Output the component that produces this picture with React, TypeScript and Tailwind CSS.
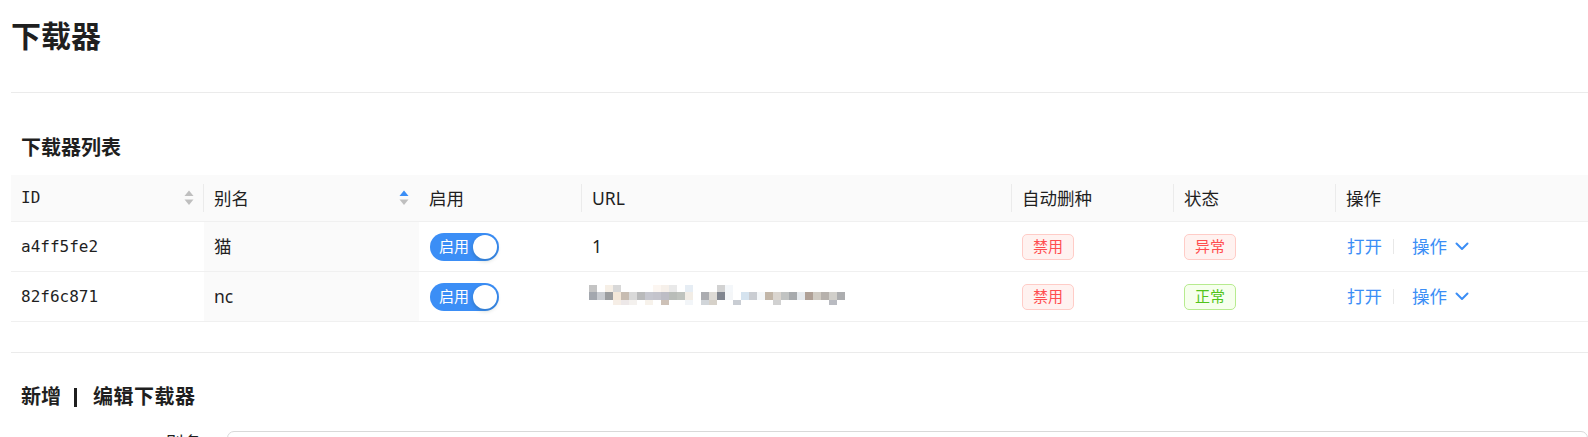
import { ReactNode } from "react";

type Downloader = {
  id: string;
  alias: string;
  enabled: boolean;
  url: string | null;
  autoDelete: boolean;
  healthy: boolean;
};

const downloaders: Downloader[] = [
  { id: "a4ff5fe2", alias: "猫", enabled: true, url: "1", autoDelete: false, healthy: false },
  { id: "82f6c871", alias: "nc", enabled: true, url: null, autoDelete: false, healthy: true },
];

// 打码后的 URL（马赛克色块）
const mosaicTop: (string | null)[] = [
  "#c4c4c4", null, "#f6efe6", "#d8d8d8", null, null, null, null,
  "#fcf6f1", "#f6f0ea", "#e9e9e9", null, "#e6edf4", null, null, null,
  "#d2d2d2", "#f4f7fa", null, null, null, null, null, null,
  null, null, null, null, null, null, null, null,
];
const mosaicMid: (string | null)[] = [
  "#a3a7ae", "#c9ccd1", "#9b9d9f", "#f3e7d8", "#c7bcb1", "#d9d9d9", "#b9babb", "#c6c7cf",
  "#c4c4cc", "#bdbdc5", "#b9bdb9", "#bfc3be", "#f2ede6", null, "#abacb0", "#dddad5",
  "#80858f", "#f4f6f8", null, "#d5e3ef", "#cacdd2", "#f4f7f9", "#c2b6a8", "#dad5cf",
  "#c1c3c2", "#a7aaad", "#e6eaee", "#afa096", "#d0cbc3", "#b6b1ac", "#d1cfca", "#acadaf",
];
const mosaicBottom: (string | null)[] = [
  null, null, null, "#f6eee6", "#ede8e8", "#f4f1ee", null, "#f7f2eb",
  null, "#cdc1b7", null, null, "#f2f5f8", null, "#d1d5d9", "#d6d1c9",
  null, null, "#c9cdd3", null, null, null, null, "#d1d1d1",
  null, null, null, null, null, null, "#b9bbc1", null,
];

function MosaicRow({ colors, h }: { colors: (string | null)[]; h: string }) {
  return (
    <div className={`flex ${h}`}>
      {colors.map((c, i) => (
        <span key={i} className="block w-2 h-full" style={{ backgroundColor: c ?? "transparent" }} />
      ))}
    </div>
  );
}

function Mosaic() {
  return (
    <div className="flex flex-col -ml-[3px] -mt-[3px]">
      <MosaicRow colors={mosaicTop} h="h-[7px]" />
      <MosaicRow colors={mosaicMid} h="h-[8px]" />
      <MosaicRow colors={mosaicBottom} h="h-[5px]" />
    </div>
  );
}

function Sorter({ active }: { active?: "up" | "down" }) {
  return (
    <svg width="10" height="16" viewBox="0 0 10 16" className="shrink-0">
      <polygon points="5,0.5 9.5,6 0.5,6" fill={active === "up" ? "#3b8ef6" : "#bfbfbf"} />
      <polygon points="0.5,9.5 9.5,9.5 5,15" fill={active === "down" ? "#3b8ef6" : "#bfbfbf"} />
    </svg>
  );
}

function HeaderCell({
  children,
  sorter,
  separator = true,
  mono,
}: {
  children: ReactNode;
  sorter?: ReactNode;
  separator?: boolean;
  mono?: boolean;
}) {
  return (
    <div className="relative flex items-center justify-between px-[10px]">
      <span className={mono ? "font-['DejaVu_Sans_Mono',monospace] text-[16px]" : ""}>{children}</span>
      {sorter}
      {separator && (
        <span className="absolute right-0 top-1/2 -translate-y-1/2 h-[28px] w-px bg-[#ebebeb]" />
      )}
    </div>
  );
}

function Switch({ checked }: { checked: boolean }) {
  return (
    <span
      className={`ml-px inline-flex h-[28px] w-[69px] items-center justify-between rounded-full ${
        checked ? "bg-[#3b8ef6]" : "bg-[#bfbfbf]"
      }`}
    >
      <span className="pl-[9px] text-[15px] leading-none text-white">启用</span>
      <span className="mr-[2px] h-6 w-6 rounded-full bg-white shadow-[0_2px_4px_rgba(0,35,11,0.2)]" />
    </span>
  );
}

function Tag({ color, children }: { color: "red" | "green"; children: ReactNode }) {
  const cls =
    color === "red"
      ? "bg-[#fff2f0] border-[#ffccc7] text-[#ff4d4f]"
      : "bg-[#f6ffed] border-[#b7eb8f] text-[#52c41a]";
  return (
    <span className={`inline-flex h-[26px] items-center rounded-[5px] border px-[10px] text-[15px] ${cls}`}>
      {children}
    </span>
  );
}

const cols = "grid grid-cols-[193px_215px_163px_430px_162px_162px_1fr]";

export default function App() {
  return (
    <div className="min-h-screen bg-white pl-[11px] text-[#1f1f1f] font-['Noto_Sans','Noto_Sans_CJK_SC',sans-serif]">
      {/* 标题 */}
      <h2 className="pt-4 text-[30px] font-bold leading-[40px]">下载器</h2>
      <div className="mt-[36px] h-px bg-[#ebebeb]" />

      {/* 下载器列表 */}
      <h3 className="mt-[41px] pl-[10px] text-[20px] font-bold leading-[28px]">下载器列表</h3>

      <div className="mt-[13px] text-[17.5px]">
        <div className={`${cols} h-[47px] border-b border-[#f0f0f0] bg-[#fafafa]`}>
          <HeaderCell mono sorter={<Sorter />}>ID</HeaderCell>
          <HeaderCell sorter={<Sorter active="up" />} separator={false}>
            别名
          </HeaderCell>
          <HeaderCell>启用</HeaderCell>
          <HeaderCell>URL</HeaderCell>
          <HeaderCell>自动删种</HeaderCell>
          <HeaderCell>状态</HeaderCell>
          <HeaderCell separator={false}>操作</HeaderCell>
        </div>

        {downloaders.map((d) => (
          <div key={d.id} className={`${cols} h-[50px] border-b border-[#f0f0f0]`}>
            <div className="flex items-center px-[10px] font-['DejaVu_Sans_Mono',monospace] text-[16px]">
              {d.id}
            </div>
            <div className="flex items-center bg-[#fafafa] px-[10px]">{d.alias}</div>
            <div className="flex items-center px-[10px]">
              <Switch checked={d.enabled} />
            </div>
            <div className="flex items-center px-[10px]">{d.url ?? <Mosaic />}</div>
            <div className="flex items-center px-[10px]">
              <Tag color={d.autoDelete ? "green" : "red"}>{d.autoDelete ? "启用" : "禁用"}</Tag>
            </div>
            <div className="flex items-center px-[10px]">
              <Tag color={d.healthy ? "green" : "red"}>{d.healthy ? "正常" : "异常"}</Tag>
            </div>
            <div className="flex items-center px-[10px] text-[#3b8ef6]">
              <span className="ml-px">打开</span>
              <span className="ml-[11px] h-[15px] w-px bg-[#e8e8e8]" />
              <span className="ml-[18px]">操作</span>
              <svg width="14" height="9" viewBox="0 0 14 9" className="ml-[8px]">
                <path d="M1.5 1.5 L7 7 L12.5 1.5" fill="none" stroke="#3b8ef6" strokeWidth="2" strokeLinecap="round" strokeLinejoin="round" />
              </svg>
            </div>
          </div>
        ))}
      </div>

      <div className="mt-[30px] h-px bg-[#ebebeb]" />

      {/* 新增 / 编辑 */}
      <h3 className="mt-[30px] flex items-center pl-[10px] text-[20px] font-bold leading-[28px]">
        <span>新增</span>
        <span className="mx-[13px] inline-block h-[19px] w-[3px] bg-[#1f1f1f]" />
        <span className="ml-[3px] tracking-[0.5px]">编辑下载器</span>
      </h3>

      <div className="mt-[20px] flex items-start">
        <label className="-mt-px w-[216px] shrink-0 pr-[26px] text-right text-[17.5px] leading-[25px]">别名</label>
        <input className="h-10 flex-1 rounded-[7px] border border-[#d9d9d9] px-3 outline-none" />
      </div>
    </div>
  );
}
